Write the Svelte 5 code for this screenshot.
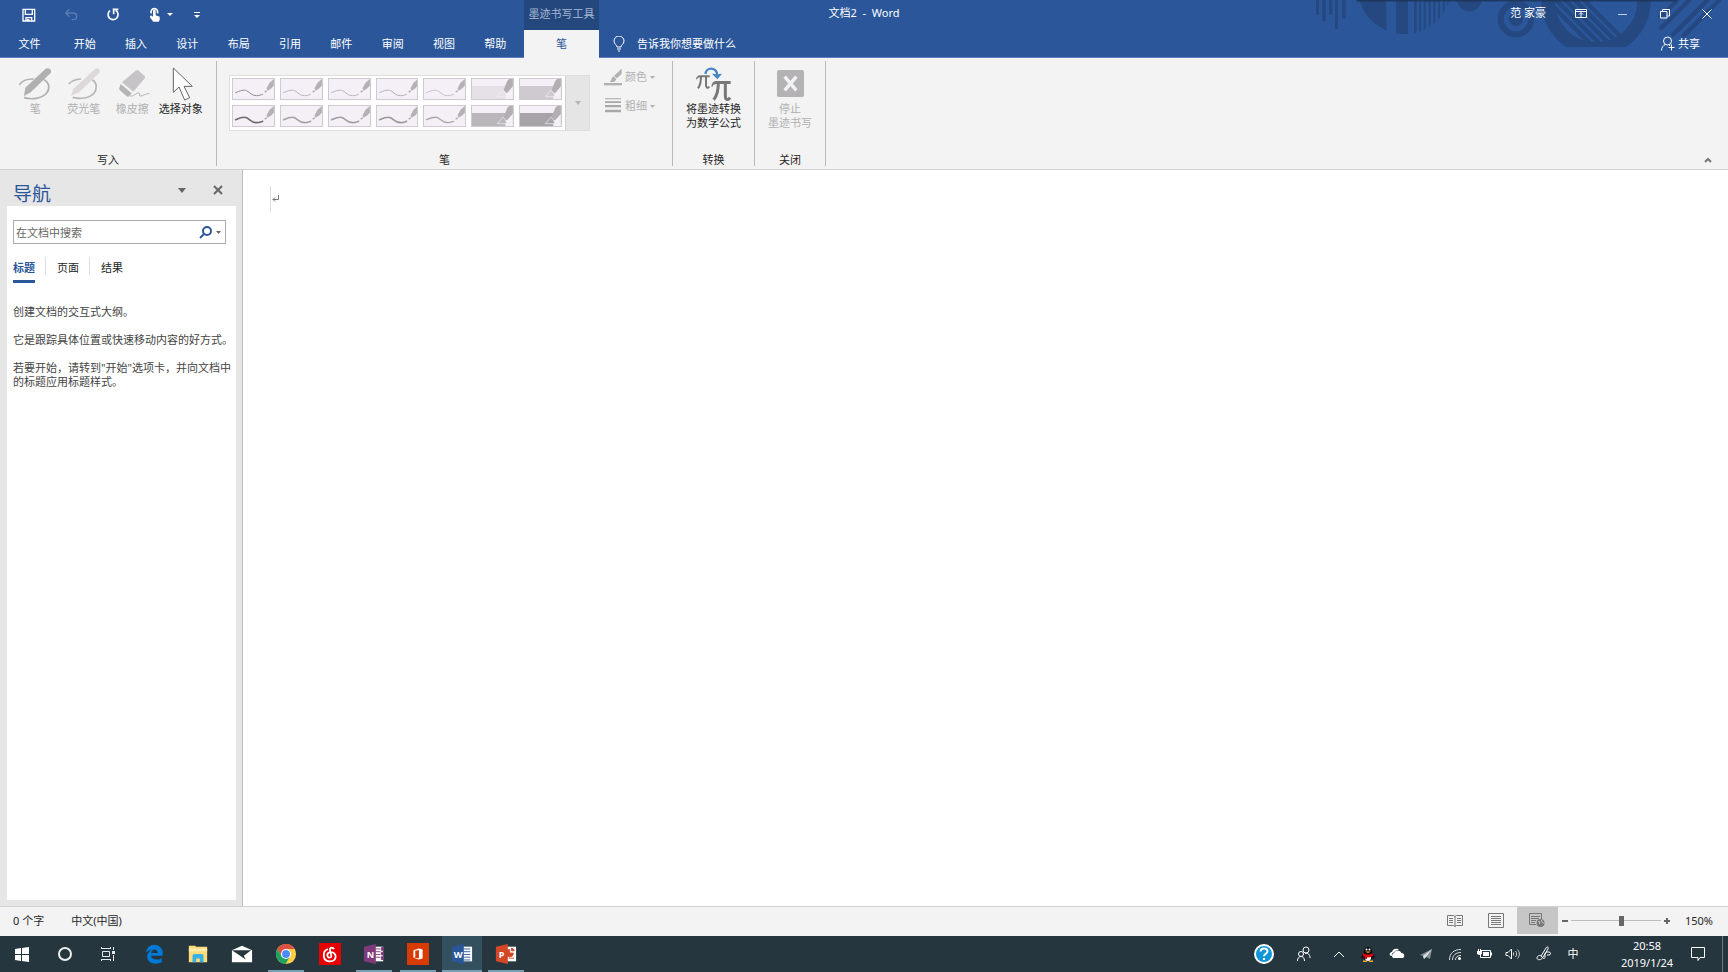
<script lang="ts">
    const tabs = ['开始', '插入', '设计', '布局', '引用', '邮件', '审阅', '视图', '帮助'];
    const navTabs = ['标题', '页面', '结果'];

    // Ink gallery: pens draw a stroke, highlighters fill a band
    const pens = [
        { kind: 'pen', color: '#8f8c90', width: 3 },
        { kind: 'pen', color: '#b9b5ba', width: 3 },
        { kind: 'pen', color: '#b9b5ba', width: 3 },
        { kind: 'pen', color: '#b3afb4', width: 3 },
        { kind: 'pen', color: '#c6c1c7', width: 3 },
        { kind: 'marker', color: '#e6e1e6', width: 0 },
        { kind: 'marker', color: '#cfcacf', width: 0 },
        { kind: 'pen', color: '#6d6b6e', width: 5 },
        { kind: 'pen', color: '#a5a2a6', width: 5 },
        { kind: 'pen', color: '#a19ea2', width: 5 },
        { kind: 'pen', color: '#9a979b', width: 5 },
        { kind: 'pen', color: '#aaa7ab', width: 4 },
        { kind: 'marker', color: '#bab7bb', width: 0 },
        { kind: 'marker', color: '#a6a4a7', width: 0 }
    ];

    let activeNav = $state('标题');
    let query = $state('');
    let zoom = $state(57);
</script>

<div class="screen">
    <header class="titlebar">
        <svg class="decor" viewBox="0 0 1314 171" aria-hidden="true">
            <defs>
                <linearGradient id="shade" x1="0" y1="0" x2="0" y2="1">
                    <stop offset="0" stop-color="#1b3357" />
                    <stop offset="1" stop-color="#1b3357" stop-opacity="0" />
                </linearGradient>
                <clipPath id="disc"><circle cx="343" cy="-38" r="140" /></clipPath>
                <clipPath id="inner"><circle cx="918" cy="3" r="124" /></clipPath>
                <clipPath id="floor"><rect x="740" y="0" width="360" height="141" /></clipPath>
            </defs>
            <g fill="#24487f">
                <path d="M78 0h9v45h-9zM97 0h10v64h-10zM117 0h10v44h-10zM135 0h9v87h-9zM157 0h10v55h-10z" />
                <g clip-path="url(#disc)">
                    <path d="M200 0h89v110h-89zM318 0h36v110h-36zM372 0h8v110h-8zM387 0h6v110h-6zM401 0h6v110h-6zM416 0h6v110h-6zM430 0h6v110h-6zM444 0h6v110h-6zM458 0h6v110h-6zM472 0h6v110h-6z" />
                </g>
                <circle cx="538" cy="-4" r="38" />
                <circle cx="678" cy="57" r="21" />
            </g>
            <circle cx="678" cy="57" r="46" fill="none" stroke="#24487f" stroke-width="18" />
            <g clip-path="url(#floor)">
                <circle cx="918" cy="3" r="144" fill="none" stroke="#24487f" stroke-width="40" />
            </g>
            <g clip-path="url(#inner)" stroke="#24487f" stroke-width="13">
                <path d="M760 -10L910 140M788 -10L938 140M816 -10L966 140M844 -10L994 140M872 -10L1022 140" />
            </g>
            <path d="M1108 55L1165 -2M1110 88L1200 -2M1145 108L1255 -2M1178 110L1290 -2" stroke="#24487f" stroke-width="13" />
            <rect x="200" width="960" height="8" fill="url(#shade)" />
        </svg>

        <div class="title-row">
            <div class="title-left">
                <div class="quick">
                    <button aria-label="保存">
                        <svg width="16" height="16" viewBox="62 22 48 48"><path d="M68 29h35v35H68zM75 30v14h21V30M77 64V54h17v10" fill="none" stroke="#fff" stroke-width="4" /><path d="M80 58h7v6h-7z" fill="#fff" /></svg>
                    </button>
                    <button aria-label="撤消">
                        <svg width="16" height="16" viewBox="190 22 48 48"><path d="M209 29l-11 11 11 11M199 40h22a10 10 0 0 1 0 20h-5" fill="none" stroke="#5b7db2" stroke-width="4" /></svg>
                    </button>
                    <button aria-label="重复">
                        <svg width="16" height="16" viewBox="315 22 48 48"><path d="M330 33a15 15 0 1 0 17-1" fill="none" stroke="#fff" stroke-width="5" /><path d="M338 29h17M341 27v17" fill="none" stroke="#fff" stroke-width="5" /></svg>
                    </button>
                    <button aria-label="触摸/鼠标模式">
                        <svg width="16" height="16" viewBox="440 22 48 48"><path d="M459 66l-11-14 4-5 6 4V34a4 4 0 0 1 8 0v13l12 4v10l-3 5z" fill="#fff" /><path d="M453 41a10 10 0 1 1 18 0" fill="none" stroke="#fff" stroke-width="5" /></svg>
                        <svg class="touch-arrow" width="6" height="4" viewBox="0 0 6 4"><path d="M0 0h6L3 3z" fill="#fff" /></svg>
                    </button>
                    <button aria-label="自定义快速访问工具栏">
                        <svg width="6" height="8" viewBox="0 0 6 8"><path d="M0 1h6v1H0zM0 4h6L3 7z" fill="#fff" /></svg>
                    </button>
                </div>
                <span class="context-title">墨迹书写工具</span>
            </div>
            <span class="doc-title">文档2&nbsp; -&nbsp; Word</span>
            <div class="window-controls">
                <span class="account">范 家豪</span>
                <button aria-label="功能区显示选项">
                    <svg width="14" height="12" viewBox="0 0 14 12"><path d="M1.500 1.500h11v8h-11zM1.500 3.500h11M7 9.500V5M5 6.500l2-2 2 2" fill="none" stroke="#fff" /></svg>
                </button>
                <button aria-label="最小化">
                    <svg width="10" height="10" viewBox="0 0 10 10"><path d="M0 5.500h9" stroke="#c3d0e4" /></svg>
                </button>
                <button aria-label="向下还原">
                    <svg width="10" height="10" viewBox="0 0 10 10"><path d="M.5 2.500h6.500v6.500H.5zM2.500 2.500v-2h7v6.500h-2" fill="none" stroke="#fff" /></svg>
                </button>
                <button aria-label="关闭">
                    <svg width="10" height="10" viewBox="0 0 10 10"><path d="M.5.5l9 9M9.500.5l-9 9" stroke="#fff" /></svg>
                </button>
            </div>
        </div>

        <nav class="tab-row" aria-label="功能区选项卡">
            <button class="tab file">文件</button>
            <div class="tabs">
                {#each tabs as tab}
                    <button class="tab">{tab}</button>
                {/each}
            </div>
            <button class="tab active">笔</button>
            <button class="tell-me">
                <svg width="12" height="16" viewBox="0 0 12 16"><path d="M4 11c0-2-3-3-3-6a5 5 0 0 1 10 0c0 3-3 4-3 6zM4 13h4M5 15h2" fill="none" stroke="#fff" /></svg>
                告诉我你想要做什么
            </button>
            <button class="share">
                <svg width="14" height="15" viewBox="0 0 14 15"><circle cx="6.500" cy="5" r="4" fill="none" stroke="#fff" /><path d="M.5 14.500c0-3 1.500-5 4-6M8 9l1 1M10.500 8.500v6M7.500 11.500h6" fill="none" stroke="#fff" /></svg>
                共享
            </button>
        </nav>
    </header>

    <section class="ribbon" aria-label="功能区">
        <div class="group write">
            <div class="tools">
                <button class="big" disabled>
                    <svg viewBox="50 195 111 111">
                        <path d="M57 254c8-11 24-18 43-17M131 239c17 9 18 28 8 40-15 17-45 21-68 14" fill="none" stroke="#b1afb2" stroke-width="5" />
                        <path d="M75 263l60-56c8-7 22 2 16 12l-60 58-20 11z" fill="#b1afb2" />
                    </svg>
                    <span>笔</span>
                </button>
                <button class="big" disabled>
                    <svg viewBox="195 195 111 111">
                        <path d="M206 252c8-9 21-14 37-15M277 239c15 9 14 28 6 39-14 17-41 21-65 14" fill="none" stroke="#b8b6b9" stroke-width="5" />
                        <path d="M220 267l65-60c8-5 18 2 13 11l-62 60-14 5-9 5z" fill="#dcd8dc" />
                    </svg>
                    <span>荧光笔</span>
                </button>
                <button class="big" disabled>
                    <svg viewBox="341 195 111 111">
                        <path d="M406 212c3-3 6-3 9 0l17 15c3 3 3 6 0 9l-33 39-34-28z" fill="#c7c4c8" />
                        <path d="M361 252l33 28-7 9c-2 2-6 2-8 0l-21-19c-2-2-2-6 0-8z" fill="#b7b4b8" />
                        <path d="M363 249l34 29" stroke="#f3f3f3" stroke-width="3" />
                        <path d="M389 288c12 3 19-12 27-9 6 3-3 9 4 9 9 0 15-7 27-8" fill="none" stroke="#b7b4b8" stroke-width="3" />
                    </svg>
                    <span>橡皮擦</span>
                </button>
                <button class="big">
                    <svg viewBox="486 195 111 111">
                        <path d="M520 204v73l17-16 17 39 15-7-17-34h25z" fill="#fff" stroke="#666" stroke-width="3" />
                    </svg>
                    <span>选择对象</span>
                </button>
            </div>
            <div class="group-label">写入</div>
        </div>

        <div class="group pens">
            <div class="pen-tools">
                <div class="gallery">
                    <div class="swatches">
                        {#each pens as pen, i}
                            <button class="swatch" aria-label="墨迹 {i + 1}" disabled>
                                <svg viewBox="0 0 123 60" preserveAspectRatio="none">
                                    {#if pen.kind === 'pen'}
                                        <path d="M8 41c14-6 24-10 33-6 11 6 15 15 30 15 8 0 12-2 18-4" fill="none" stroke={pen.color} stroke-width={pen.width} stroke-linecap="round" />
                                        <path d="M94 38l6-5 3 4-6 4zM101 28l9-17 13-11v20l-9 9-10 6z" fill="#b4b2b5" />
                                    {:else}
                                        <path d="M0 21h123v39H0z" fill={pen.color} />
                                        <path d="M100 60V44l9-5 14-16v37z" fill="#f5f0f7" />
                                        <path d="M76 53l18-20 9 13 1 7z" fill={pen.color} stroke="#f5f0f7" stroke-width="2" />
                                        <path d="M95 33l11-27 6-6h11v21l-18 22z" fill="#b1afb2" />
                                    {/if}
                                </svg>
                            </button>
                        {/each}
                    </div>
                    <button class="more" aria-label="其他" disabled>
                        <svg width="6" height="4" viewBox="0 0 6 4"><path d="M0 0h6L3 4z" fill="#b6b6b6" /></svg>
                    </button>
                </div>
                <div class="pen-options">
                    <button disabled>
                        <svg width="18" height="18" viewBox="522 206 54 54"><path d="M522 251h54v7h-54z" fill="#b1afb2" /><path d="M575 208v15l-14 14-9-7zM550 231l9 8c-2 9-10 10-20 9 6-4 5-14 11-17z" fill="#b1afb2" /></svg>
                        颜色
                        <svg width="5" height="3" viewBox="0 0 5 3"><path d="M0 0h5L2.500 3z" fill="#b1afb2" /></svg>
                    </button>
                    <button disabled>
                        <svg width="18" height="18" viewBox="522 293 54 54"><path d="M525 297h48v3h-48zM525 306h48v5h-48zM525 317h48v7h-48zM525 331h48v8h-48z" fill="#a9a7aa" /></svg>
                        粗细
                        <svg width="5" height="3" viewBox="0 0 5 3"><path d="M0 0h5L2.500 3z" fill="#b1afb2" /></svg>
                    </button>
                </div>
            </div>
            <div class="group-label">笔</div>
        </div>

        <div class="group convert">
            <button class="big">
                <svg viewBox="796 195 111 111">
                    <path d="M799 238c2-9 6-12 13-12h28v6h-28c-5 0-8 2-10 6z" fill="#777" />
                    <path d="M814 230c0 13-2 25-9 35M829 230v26c0 8 5 10 10 4" fill="none" stroke="#777" stroke-width="6" />
                    <path d="M845 260c2-13 7-17 16-17h42v9h-42c-7 0-10 2-13 8z" fill="#777" />
                    <path d="M866 249c0 20-3 37-14 50M887 249v38c0 13 8 15 14 6" fill="none" stroke="#777" stroke-width="9" />
                    <path d="M827 222c3-22 34-22 36 4" fill="none" stroke="#4486c2" stroke-width="7" />
                    <path d="M847 221l10 1 6 4 5-4 9-1-14 17z" fill="#4486c2" />
                </svg>
                <span>将墨迹转换<br />为数学公式</span>
            </button>
            <div class="group-label">转换</div>
        </div>

        <div class="group close">
            <button class="big" disabled>
                <svg viewBox="1025 195 111 111">
                    <rect x="1040" y="210" width="81" height="81" rx="5" fill="#b4b2b5" />
                    <path d="M1063 230l35 41M1098 230l-35 41" stroke="#f3f3f3" stroke-width="10" />
                </svg>
                <span>停止<br />墨迹书写</span>
            </button>
            <div class="group-label">关闭</div>
        </div>

        <button class="collapse" aria-label="折叠功能区">
            <svg width="8" height="6" viewBox="0 0 8 6"><path d="M1 5l3-3 3 3" fill="none" stroke="#777" stroke-width="2" /></svg>
        </button>
    </section>

    <div class="workspace">
        <aside class="nav-pane">
            <div class="nav-header">
                <h2>导航</h2>
                <button aria-label="任务窗格选项">
                    <svg width="8" height="5" viewBox="0 0 8 5"><path d="M0 0h8L4 5z" fill="#666" /></svg>
                </button>
                <button aria-label="关闭窗格">
                    <svg width="10" height="10" viewBox="0 0 10 10"><path d="M1 1l8 8M9 1l-8 8" stroke="#666" stroke-width="2" /></svg>
                </button>
            </div>
            <div class="nav-body">
                <div class="search">
                    <input type="text" aria-label="在文档中搜索" placeholder="在文档中搜索" bind:value={query} />
                    <button aria-label="搜索">
                        <svg width="13" height="13" viewBox="0 0 13 13"><circle cx="8" cy="5" r="4" fill="none" stroke="#2b579a" stroke-width="2" /><path d="M5 8l-4 4" stroke="#2b579a" stroke-width="2" /></svg>
                        <svg width="5" height="3" viewBox="0 0 5 3"><path d="M0 0h5L2.500 3z" fill="#666" /></svg>
                    </button>
                </div>
                <div class="nav-tabs">
                    {#each navTabs as tab}
                        <button class:selected={activeNav === tab} onclick={() => (activeNav = tab)}><span>{tab}</span></button>
                    {/each}
                </div>
                <div class="hint">
                    <p>创建文档的交互式大纲。</p>
                    <p>它是跟踪具体位置或快速移动内容的好方式。</p>
                    <p>若要开始，请转到"开始"选项卡，并向文档中的标题应用标题样式。</p>
                </div>
            </div>
        </aside>
        <main class="document">
            <div class="paragraph">
                <svg width="7" height="8" viewBox="0 0 7 8"><path d="M6.500 0v4.500H1M3 2.500l-2 2 2 2" fill="none" stroke="#777" /></svg>
            </div>
        </main>
    </div>

    <div class="statusbar">
        <span>0 个字</span>
        <span>中文(中国)</span>
        <div class="views">
            <button aria-label="阅读视图">
                <svg width="16" height="14" viewBox="0 0 16 14"><path d="M.5 1.500h6L8 2.500l1.500-1h6v10h-6l-1.500 1-1.500-1h-6zM8 2v11M2 4.500h4M2 6.500h4M2 8.500h4M10 4.500h4M10 6.500h4M10 8.500h4" fill="none" stroke="#777" /></svg>
            </button>
            <button aria-label="页面视图">
                <svg width="16" height="16" viewBox="0 0 16 16"><path d="M.5.5h15v14H.5zM3 3.500h10M3 5.500h10M3 7.500h10M3 9.500h10M3 11.500h10" fill="none" stroke="#777" /></svg>
            </button>
            <button class="current" aria-label="Web 版式视图">
                <svg width="16" height="15" viewBox="0 0 16 15"><path d="M7 11.500H.5V.5h12V6M2 3.500h9M2 5.500h8M2 7.500h5M2 9.500h4" fill="none" stroke="#777" /><circle cx="11.500" cy="10" r="4" fill="#777" /><path d="M9 8.500l2 .5-.5 2M12.500 7l.5 2 2 1.500" fill="none" stroke="#c6c6c6" /></svg>
            </button>
        </div>
        <div class="zoom">
            <button aria-label="缩小"><svg width="8" height="8" viewBox="0 0 8 8"><path d="M1 4h6" stroke="#666" stroke-width="2" /></svg></button>
            <input type="range" aria-label="显示比例" min="0" max="100" bind:value={zoom} />
            <button aria-label="放大"><svg width="8" height="8" viewBox="0 0 8 8"><path d="M1 4h6M4 1v6" stroke="#666" stroke-width="2" /></svg></button>
        </div>
        <span class="percent">150%</span>
    </div>

    <footer class="taskbar">
        <div class="system">
            <button aria-label="开始">
                <svg width="16" height="16" viewBox="0 0 16 16"><path d="M1 3l6-1v6H1zM8 2l7-1v7H8zM1 9h6v6l-6-1zM8 9h7v7l-7-1z" fill="#fff" /></svg>
            </button>
            <button aria-label="Cortana">
                <svg width="16" height="16" viewBox="0 0 16 16"><circle cx="8" cy="8" r="6" fill="none" stroke="#eee" stroke-width="2" /></svg>
            </button>
            <button aria-label="任务视图">
                <svg width="16" height="16" viewBox="0 0 16 16"><path d="M1 2.500h10M1 13.500h10M2.500 5.500h7v5h-7zM1.500 1v2M10.500 1v2M1.500 13v2M10.500 13v2M13.500 1v3M13.500 9v6" fill="none" stroke="#e5e8e9" /><path d="M12 5h3v3h-3z" fill="#e5e8e9" /></svg>
            </button>
        </div>
        <div class="apps">
            <button aria-label="Edge">
                <svg viewBox="0 0 24 24"><path d="M3 11C4 5 8 2 12.500 2 18 2 21.500 6 21.500 11v3H9c0 3 3 4 6 4 2 0 4-.5 5.500-1.500V21c-2 1-4 1.500-7 1.500C8 22.500 4.500 19 4.500 15c0-3 2-6 5-7-4-.3-5.500 1.500-6.500 3zM9 11h7c0-2-1-4-3.500-4C10.500 7 9.300 9 9 11z" fill="#0078d7" /></svg>
            </button>
            <button aria-label="文件资源管理器">
                <svg viewBox="0 0 24 24"><path d="M2 3h7l1 1h12v17H2z" fill="#fddc7d" /><path d="M2 6h20v3H2z" fill="#ffeba8" /><path d="M6 21v-7c0-1 1-2 2-2h8c1 0 2 1 2 2v7h-4v-4h-4v4z" fill="#3ab1e6" /></svg>
            </button>
            <button aria-label="邮件">
                <svg viewBox="0 0 24 24"><path d="M1 8l11-5 11 5v13H1z" fill="#fff" /><path d="M1 8h21l-8 6 2 4-6-4z" fill="#26363e" /></svg>
            </button>
            <button class="running" aria-label="Chrome">
                <svg viewBox="0 0 24 24"><circle cx="12" cy="12" r="11" fill="#ffce43" /><path d="M12 6.500h9.500A11 11 0 0 0 2.500 6.500l4.700 8z" fill="#dd5144" /><path d="M2.500 6.500A11 11 0 0 0 11.500 23l5-8.500H7.200z" fill="#1da362" /><circle cx="12" cy="12" r="5.500" fill="#fff" /><circle cx="12" cy="12" r="4.300" fill="#4b8bf4" /></svg>
            </button>
            <button aria-label="网易云音乐">
                <svg viewBox="0 0 24 24"><path d="M0 0h24v24H0z" fill="#e60000" /><path d="M9 7c-5 2-6 13 3 13 8 0 8-10 1-10-5 0-5 6-1.500 6 3 0 2-2 .5-8-.5-2 1-4 4-2" fill="none" stroke="#fff" stroke-width="2" stroke-linecap="round" /></svg>
            </button>
            <button class="running" aria-label="OneNote">
                <svg viewBox="0 0 24 24"><path d="M12 4h10v16H12z" fill="#fff" /><path d="M14 6.500h5M14 9.500h5M14 12.500h5M14 15.500h5M20 5h2v3h-2zM20 10h2v3h-2zM20 15h2v3h-2z" fill="#80397b" stroke="#80397b" /><path d="M1 4l13-3v22L1 20z" fill="#80397b" /><text x="4" y="16" class="glyph">N</text></svg>
            </button>
            <button class="running" aria-label="Office">
                <svg viewBox="0 0 24 24"><path d="M0 0h24v24H0z" fill="#d83b01" /><path d="M7 8l6-2 4 1v10l-4 1-6-2 6 .5v-9L9 8.500v7l-2 .5z" fill="#fff" /></svg>
            </button>
            <button class="running current" aria-label="Word">
                <svg viewBox="0 0 24 24"><path d="M12 4h11v16H12z" fill="#fff" /><path d="M14 6.500h7M14 9.500h7M14 12.500h7M14 15.500h7M14 18.500h7" stroke="#2b579a" /><path d="M1 4l13-3v22L1 20z" fill="#2b579a" /><text x="3" y="16" class="glyph">W</text></svg>
            </button>
            <button class="running" aria-label="PowerPoint">
                <svg viewBox="0 0 24 24"><path d="M12 4h11v16H12z" fill="#fff" /><path d="M16 7a4 4 0 1 0 4 4h-4zM18 5.500a4 4 0 0 1 3 3h-3zM15 16.500h6" fill="#d24726" stroke="#d24726" /><path d="M1 4l13-3v22L1 20z" fill="#d24726" /><text x="4" y="16" class="glyph">P</text></svg>
            </button>
        </div>

        <button class="help" aria-label="帮助">
            <svg width="22" height="22" viewBox="0 0 22 22"><circle cx="11" cy="11" r="9" fill="#0f95d8" stroke="#fff" stroke-width="2" /><path d="M7.500 8.500c.3-4 7-4 7-.3 0 2.500-3.500 2.500-3.500 5M11 15v2" fill="none" stroke="#fff" stroke-width="2" /></svg>
        </button>
        <button class="people" aria-label="人脉">
            <svg width="16" height="16" viewBox="0 0 16 16"><circle cx="5" cy="8" r="2.500" fill="none" stroke="#fff" /><path d="M1.500 15c0-3 1.500-4.500 3.500-4.500S8.500 12 8.500 15" fill="none" stroke="#fff" /><circle cx="10" cy="4" r="3" fill="none" stroke="#fff" /><path d="M9 7.500c3-1 5 1 5 4.500" fill="none" stroke="#fff" /></svg>
        </button>
        <div class="tray">
            <button aria-label="显示隐藏的图标">
                <svg viewBox="0 0 16 16"><path d="M3 11l5-5 5 5" fill="none" stroke="#fff" /></svg>
            </button>
            <button aria-label="QQ">
                <svg viewBox="0 0 16 16"><path d="M3 8c-2 2-2 4-1 5l2-2zM13 8c2 2 2 4 1 5l-2-2z" fill="#111" /><ellipse cx="8" cy="9" rx="5" ry="6" fill="#111" /><ellipse cx="8" cy="5" rx="4" ry="4" fill="#111" /><ellipse cx="8" cy="12" rx="3" ry="3" fill="#fff" /><circle cx="6.500" cy="3.500" r="1" fill="#fff" /><circle cx="9.500" cy="3.500" r="1" fill="#fff" /><path d="M5 5.500h6L8 7z" fill="#f7a928" /><path d="M3 7c3 2 7 2 10 0v3c-2 1-4 1.500-6 1.500V13H5v-2L3 10z" fill="#e60012" /><path d="M3 14.500h4V16H3zM9 14.500h4V16H9z" fill="#f7a928" /></svg>
            </button>
            <button aria-label="OneDrive">
                <svg viewBox="0 0 16 16"><path d="M4 12a3 3 0 0 1 1-5 4 4 0 0 1 7.500 0C16 7 16 12 13.500 12z" fill="#fff" /><path d="M1 9.500C0 7 2 6 3 6c1-4 5.500-4 7-2-3 0-4 1-5 2.500-2 0-2.500 2-2 3.500z" fill="#fff" /></svg>
            </button>
            <button aria-label="Telegram">
                <svg viewBox="0 0 16 16"><path d="M2 9L14 3l-2 10-4-2-2 2-1-3z" fill="#858e92" /><path d="M5 10l9-7-6 8-2 2z" fill="#dfe2e3" /></svg>
            </button>
            <button aria-label="网络">
                <svg viewBox="0 0 16 16"><g fill="none" stroke="#dce0e2"><path d="M2.500 14C2.500 7 7 3.500 14 3.500M5.500 14C5.500 9 9 6.500 14 6.500M8.500 14c0-3 2-4.500 5.500-4.500" /></g><circle cx="12.500" cy="12.500" r="1.500" fill="#fff" /></svg>
            </button>
            <button aria-label="电池">
                <svg viewBox="0 0 16 16"><path d="M4.500 4.500h10v7h-10zM15.500 6.500v3" fill="none" stroke="#fff" /><path d="M7 6h6v4H7zM1 5h5v3L4 9H3L1 8zM2 3h1v2H2zM4 3h1v2H4z" fill="#fff" /></svg>
            </button>
            <button aria-label="音量">
                <svg viewBox="0 0 16 16"><path d="M1 6.500h2L6.500 3v10L3 9.500H1z" fill="none" stroke="#fff" /><path d="M8.500 6.500v3M10.500 5c1.500 2 1.500 4 0 6M12.500 3.500c2.500 3 2.500 6 0 9" fill="none" stroke="#c6cdcf" /></svg>
            </button>
        </div>
        <button class="ink" aria-label="Windows Ink 工作区">
            <svg width="16" height="16" viewBox="0 0 16 16"><path d="M5 10l5-8c1-2 3-1 2 1L7 11c-2 4-6 3-6 1s3-4 5-1c1 2 3 2 3 0V8c0-1 1-2 2-2h2c2 0 2 3 0 3h-2" fill="none" stroke="#fff" /></svg>
        </button>
        <button class="ime">中</button>
        <button class="clock"><span>20:58</span><span>2019/1/24</span></button>
        <button class="notify" aria-label="操作中心">
            <svg width="16" height="16" viewBox="0 0 16 16"><path d="M1.500 1.500h13v10H10l-2 3v-3H1.500z" fill="none" stroke="#fff" /></svg>
        </button>
        <button class="desktop" aria-label="显示桌面"></button>
    </footer>
</div>

<style>
    :global(body) {
        font-family: "Noto Sans", "Noto Sans CJK SC", sans-serif;
        font-size: 11px;
        line-height: 14px;
        color: #262626;
    }

    button {
        padding: 0;
        border: none;
        background: none;
        color: inherit;
        font: inherit;
        display: flex;
        align-items: center;
        justify-content: center;
    }

    svg {
        display: block;
        flex-shrink: 0;
    }

    .screen {
        display: flex;
        flex-direction: column;
        min-height: 100vh;
        background: #fff;
    }

    /* Title bar */
    .titlebar {
        position: relative;
        background: #2b579a;
        border-bottom: 1px solid #5d81c0;
        color: #fff;
    }

    .decor {
        position: absolute;
        top: 0;
        right: 0;
        height: 57px;
    }

    .title-row,
    .tab-row {
        position: relative;
    }

    .title-row {
        display: grid;
        grid-template-columns: 1fr auto 1fr;
        height: 30px;
    }

    .title-left {
        display: flex;
    }

    .quick {
        display: flex;
        width: 516px;
        padding-left: 8px;
    }

    .quick button {
        width: 42px;
        position: relative;
    }

    .touch-arrow {
        position: absolute;
        left: 33px;
        top: 13px;
    }

    .context-title {
        display: flex;
        align-items: center;
        justify-content: center;
        width: 75px;
        box-sizing: border-box;
        padding-bottom: 3px;
        background: #24477d;
        color: #a6b8d4;
        white-space: nowrap;
    }

    .doc-title {
        line-height: 26px;
        white-space: pre;
    }

    .window-controls {
        display: flex;
        justify-content: flex-end;
        height: 28px;
    }

    .window-controls button {
        width: 42px;
    }

    .account {
        margin-right: 14px;
        line-height: 26px;
    }

    .tab-row {
        display: flex;
        height: 27px;
    }

    .tabs {
        display: grid;
        grid-template-columns: repeat(9, 1fr);
        width: 462px;
        margin-right: 3px;
    }

    .file {
        width: 59px;
    }

    .tab.active {
        width: 75px;
        height: 28px;
        background: #f3f3f3;
        color: #2b579a;
    }

    .tell-me {
        gap: 12px;
        margin-left: 14px;
    }

    .share {
        gap: 3px;
        margin-left: auto;
        margin-right: 28px;
    }

    /* Ribbon */
    .ribbon {
        display: flex;
        padding: 3px 0;
        background: #f3f3f3;
        border-bottom: 1px solid #d2d2d2;
    }

    .group {
        display: flex;
        flex-direction: column;
        justify-content: space-between;
        min-height: 105px;
        border-right: 1px solid #b9b9b9;
    }

    .group-label {
        line-height: 12px;
        text-align: center;
    }

    .write {
        width: 216px;
    }

    .tools {
        display: grid;
        grid-template-columns: repeat(4, 1fr);
        margin: 0 11px;
    }

    .big {
        flex-direction: column;
        justify-content: flex-start;
        padding-top: 4px;
        white-space: nowrap;
    }

    .big svg {
        width: 37px;
        height: 37px;
    }

    .ribbon button:disabled {
        color: #b1b1b1;
    }

    .pen-tools {
        display: flex;
        gap: 14px;
        padding: 14px 15px 0 12px;
    }

    .gallery {
        display: flex;
        width: 361px;
        height: 56px;
        box-sizing: border-box;
        border: 1px solid #dedede;
        background: #fff;
    }

    .swatches {
        flex: 1;
        display: grid;
        grid-template-columns: repeat(7, 1fr);
        gap: 5px;
        padding: 2px 3px 3px 2px;
    }

    .swatch {
        border: 1px solid #cfcacf;
        background: #f5f0f7;
    }

    .swatch svg {
        width: 100%;
        height: 100%;
    }

    .more {
        width: 24px;
        background: #e5e5e5;
        border-left: 1px solid #d0d0d0;
    }

    .pen-options {
        display: flex;
        flex-direction: column;
        align-items: flex-start;
        gap: 11px;
        width: 53px;
        margin-top: -7px;
    }

    .pen-options button {
        gap: 3px;
        height: 18px;
        white-space: nowrap;
    }

    .convert {
        width: 81px;
    }

    .close {
        width: 70px;
    }

    .collapse {
        align-self: flex-end;
        width: 20px;
        height: 12px;
        margin-left: auto;
        margin-right: 10px;
    }

    /* Navigation pane */
    .workspace {
        flex: 1;
        display: flex;
    }

    .nav-pane {
        display: flex;
        flex-direction: column;
        width: 243px;
        box-sizing: border-box;
        padding: 0 6px 6px 7px;
        background: #e6e6e6;
        border-right: 1px solid #bcbcbc;
    }

    .nav-header {
        display: flex;
        align-items: center;
        height: 32px;
        padding-top: 4px;
    }

    .nav-header h2 {
        flex: 1;
        margin: 8px 0 0 6px;
        color: #2b579a;
        font-size: 19px;
        font-weight: 400;
        line-height: 28px;
    }

    .nav-header button {
        width: 36px;
        height: 28px;
    }

    .nav-body {
        flex: 1;
        padding: 14px 0 14px 6px;
        background: #fff;
    }

    .search {
        display: flex;
        margin-right: 10px;
        border: 1px solid #ababab;
    }

    .search input {
        flex: 1;
        min-width: 0;
        height: 22px;
        padding: 0 2px;
        border: none;
        outline: none;
        background: none;
        font: inherit;
    }

    .search input::placeholder {
        color: #666;
        opacity: 1;
    }

    .search button {
        gap: 4px;
        padding-right: 4px;
    }

    .nav-tabs {
        display: flex;
        margin-top: 13px;
    }

    .nav-tabs button {
        padding: 0 10px 0 11px;
        height: 18px;
        border-right: 1px solid #dcdcdc;
    }

    .nav-tabs button:first-child {
        padding-left: 0;
    }

    .nav-tabs button:last-child {
        border: none;
    }

    .nav-tabs span {
        padding: 9px 0 5px;
        border-bottom: 3px solid transparent;
        margin-top: 2px;
    }

    .nav-tabs .selected span {
        color: #2b579a;
        font-weight: 700;
        border-color: #2b579a;
    }

    .hint {
        margin-top: 30px;
        color: #444;
    }

    .hint p {
        margin: 0 0 14px;
    }

    /* Document */
    .document {
        flex: 1;
        padding: 16px 27px;
    }

    .paragraph {
        display: flex;
        align-items: center;
        height: 26px;
        padding-left: 1px;
        border-left: 1px solid #dcdcdc;
    }

    /* Status bar */
    .statusbar {
        display: flex;
        align-items: center;
        gap: 27px;
        height: 27px;
        padding: 0 0 2px 13px;
        background: #f3f3f3;
        border-top: 1px solid #d2d2d2;
    }

    .views {
        display: flex;
        align-self: stretch;
        margin-left: auto;
    }

    .views button {
        width: 41px;
    }

    .views .current {
        background: #c6c6c6;
    }

    .zoom {
        display: flex;
        align-items: center;
        gap: 2px;
        margin-left: -24px;
    }

    .zoom input {
        width: 90px;
        height: 12px;
        margin: 0;
        appearance: none;
        background: linear-gradient(#bdbdbd, #bdbdbd) center / 100% 1px no-repeat;
    }

    .zoom input::-webkit-slider-thumb {
        appearance: none;
        width: 5px;
        height: 10px;
        background: #666;
    }

    .percent {
        margin-left: -13px;
        padding-right: 15px;
    }

    /* Taskbar */
    .taskbar {
        display: flex;
        height: 36px;
        background: #26363e;
        color: #fff;
    }

    .system,
    .apps,
    .tray {
        display: flex;
    }

    .system button {
        width: 43px;
    }

    .apps {
        margin-left: 3px;
    }

    .apps button {
        width: 40px;
        margin: 0 2px;
        position: relative;
    }

    .apps svg {
        width: 22px;
        height: 22px;
    }

    .apps .running::after {
        content: "";
        position: absolute;
        left: 2px;
        right: 2px;
        bottom: 0;
        height: 2px;
        background: #76a0b4;
    }

    .apps .current {
        background: #33505e;
    }

    .apps .current::after {
        left: 0;
        right: 0;
    }

    .glyph {
        font-size: 10px;
        font-weight: 700;
        fill: #fff;
    }

    .help {
        width: 40px;
        margin-left: auto;
    }

    .people {
        width: 40px;
    }

    .tray button {
        width: 29px;
    }

    .tray svg {
        width: 16px;
        height: 16px;
    }

    .ink {
        width: 34px;
    }

    .ime {
        width: 24px;
    }

    .clock {
        flex-direction: column;
        width: 54px;
        margin-left: 35px;
        line-height: 17px;
    }

    .notify {
        width: 48px;
    }

    .desktop {
        width: 6px;
        border-left: 1px solid #6c787d;
    }
</style>
